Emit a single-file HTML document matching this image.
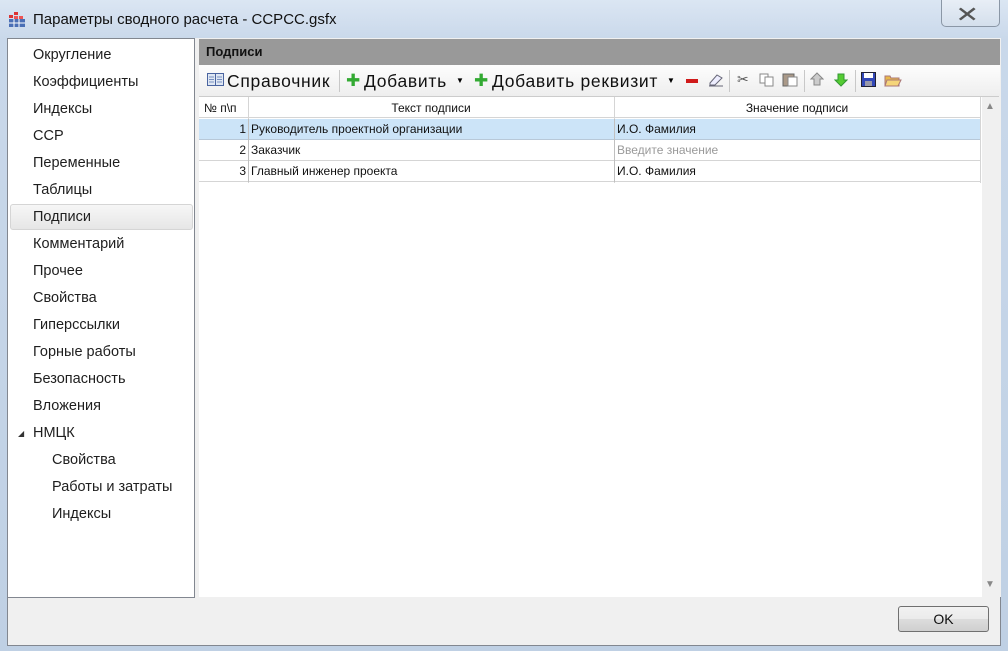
<!DOCTYPE html>
<html><head><meta charset="utf-8"><style>
*{margin:0;padding:0;box-sizing:border-box}
body{width:1008px;height:651px;overflow:hidden;font-family:"Liberation Sans","DejaVu Sans",sans-serif;background:linear-gradient(180deg,#dbe6f3 0,#c9d8ea 40px,#bfd0e4 100%);position:relative}
.a{position:absolute}
.side{left:7px;top:38px;width:188px;height:560px;background:#fff;border:1px solid #828790}
.side div{position:absolute;font-size:14.5px;color:#1e1e1e;white-space:nowrap}
.client{left:195px;top:38px;width:806px;height:608px;background:#f0f0f0}
.bottom{left:7px;top:597px;width:994px;height:49px;background:#f0f0f0;border:1px solid #828790;border-top:none}
.tb{font-size:17.5px;color:#111;white-space:nowrap;letter-spacing:0.7px}
.grid{left:199px;top:96px;width:800px;height:501px;background:#fff;border-top:1px solid #ccc}
.cell{position:absolute;font-size:12px;color:#111;white-space:nowrap;line-height:20px}
.sep{position:absolute;width:1px;height:22px;top:70px;background:#c8c8c8}
</style></head><body>
<svg class="a" style="left:8px;top:12px" width="18" height="16"><rect x="1" y="3" width="4" height="3" fill="#d33"/><rect x="6" y="0" width="4" height="3" fill="#d33"/><rect x="1" y="7" width="16" height="8" fill="#4a6fb5"/><rect x="6" y="4" width="4" height="3" fill="#e55"/><rect x="11" y="4" width="4" height="3" fill="#e55"/><line x1="1" y1="11" x2="17" y2="11" stroke="#fff"/><line x1="6" y1="7" x2="6" y2="15" stroke="#fff"/><line x1="11" y1="7" x2="11" y2="15" stroke="#fff"/></svg>
<div class="a" style="left:33px;top:11px;font-size:15px;color:#111">Параметры сводного расчета - CCPCC.gsfx</div>
<div class="a" style="left:941px;top:0;width:59px;height:27px;border:1px solid #8b97a6;border-top:none;border-radius:0 0 5px 5px;background:linear-gradient(#e8eef6,#d4dfec)"></div>
<div class="a" style="left:958px;top:2px;font-size:22px;color:#555;font-weight:bold;transform:scaleX(1.3)">✕</div>

<div class="a client"></div>
<div class="a bottom"></div>
<div class="a side">
<div style="left:25px;top:8px">Округление</div>
<div style="left:25px;top:35px">Коэффициенты</div>
<div style="left:25px;top:62px">Индексы</div>
<div style="left:25px;top:89px">ССР</div>
<div style="left:25px;top:116px">Переменные</div>
<div style="left:25px;top:143px">Таблицы</div>
<div style="left:2px;top:165px;width:183px;height:26px;border:1px solid #d5d5d5;border-radius:3px;background:linear-gradient(#f6f6f6,#e6e6e6)"></div>
<div style="left:25px;top:170px">Подписи</div>
<div style="left:25px;top:197px">Комментарий</div>
<div style="left:25px;top:224px">Прочее</div>
<div style="left:25px;top:251px">Свойства</div>
<div style="left:25px;top:278px">Гиперссылки</div>
<div style="left:25px;top:305px">Горные работы</div>
<div style="left:25px;top:332px">Безопасность</div>
<div style="left:25px;top:359px">Вложения</div>
<div style="left:10px;top:390px;font-size:8px;color:#333">◢</div>
<div style="left:25px;top:386px">НМЦК</div>
<div style="left:44px;top:413px">Свойства</div>
<div style="left:44px;top:440px">Работы и затраты</div>
<div style="left:44px;top:467px">Индексы</div>
</div>

<div class="a" style="left:199px;top:39px;width:801px;height:26px;background:#999"></div>
<div class="a" style="left:206px;top:44px;font-size:13px;font-weight:bold;color:#111">Подписи</div>
<div class="a" style="left:199px;top:65px;width:801px;height:31px;background:linear-gradient(#fdfdfd,#eeeeee)"></div>

<svg class="a" style="left:207px;top:73px" width="17" height="14"><rect x="0.5" y="0.5" width="16" height="12" fill="#dfe7f3" stroke="#4a64a0"/><line x1="8.5" y1="1" x2="8.5" y2="13" stroke="#4a64a0"/><path d="M2 4h5M2 6.5h5M2 9h5M10 4h5M10 6.5h5M10 9h5" stroke="#7890c0"/></svg>
<div class="a tb" style="left:227px;top:71px">Справочник</div>
<div class="sep" style="left:339px"></div>
<div class="a" style="left:346px;top:71px;font-size:17px;color:#3a3;font-weight:bold">✚</div>
<div class="a tb" style="left:364px;top:71px">Добавить</div>
<div class="a" style="left:456px;top:76px;font-size:8px">▼</div>
<div class="a" style="left:474px;top:71px;font-size:17px;color:#3a3;font-weight:bold">✚</div>
<div class="a tb" style="left:492px;top:71px">Добавить реквизит</div>
<div class="a" style="left:667px;top:76px;font-size:8px">▼</div>
<div class="a" style="left:686px;top:79px;width:12px;height:4px;background:#d01a1a"></div>
<svg class="a" style="left:707px;top:73px" width="17" height="14"><path d="M3 10L10 2l5 3-7 7H3z" fill="#eef" stroke="#667"/><line x1="2" y1="13" x2="16" y2="13" stroke="#667"/></svg>
<div class="sep" style="left:729px"></div>
<div class="a" style="left:737px;top:71px;font-size:14px;color:#555">✂</div>
<svg class="a" style="left:759px;top:73px" width="16" height="14"><rect x="1" y="1" width="8" height="9" fill="#fff" stroke="#888"/><rect x="6" y="4" width="8" height="9" fill="#fff" stroke="#888"/></svg>
<svg class="a" style="left:782px;top:72px" width="17" height="15"><rect x="1" y="2" width="11" height="12" fill="#a98" stroke="#666"/><rect x="6" y="5" width="9" height="9" fill="#fff" stroke="#888"/></svg>
<div class="sep" style="left:804px"></div>
<svg class="a" style="left:810px;top:72px" width="14" height="15"><path d="M7 1L1 7h3v6h6V7h3z" fill="#ccc" stroke="#888"/></svg>
<svg class="a" style="left:834px;top:72px" width="14" height="15"><path d="M7 14L1 8h3V2h6v6h3z" fill="#5c3" stroke="#393"/></svg>
<div class="sep" style="left:855px"></div>
<svg class="a" style="left:861px;top:72px" width="15" height="15"><rect x="0.5" y="0.5" width="14" height="14" fill="#3348b8" stroke="#223"/><rect x="3" y="1" width="9" height="5" fill="#fff"/><rect x="4" y="9" width="7" height="5" fill="#99a"/></svg>
<svg class="a" style="left:884px;top:72px" width="18" height="15"><path d="M1 4h5l1 2h8v8H1z" fill="#e8b84a" stroke="#a77"/><path d="M3 8h14l-3 6H1z" fill="#f5d57a" stroke="#a77"/></svg>

<div class="a grid"></div>
<div class="a" style="left:199px;top:97px;width:782px;height:21px;background:#fff;border-bottom:1px solid #d5d5d5"></div>
<div class="a" style="left:248px;top:97px;width:1px;height:86px;background:#d5d5d5"></div>
<div class="a" style="left:614px;top:97px;width:1px;height:86px;background:#d5d5d5"></div>
<div class="a" style="left:980px;top:97px;width:1px;height:86px;background:#d5d5d5"></div>
<div class="cell" style="left:204px;top:98px">№ п\п</div>
<div class="cell" style="left:248px;top:98px;width:366px;text-align:center">Текст подписи</div>
<div class="cell" style="left:614px;top:98px;width:366px;text-align:center">Значение подписи</div>
<div class="a" style="left:199px;top:119px;width:781px;height:21px;background:#cce4f8;border-bottom:1px solid #b8c8d8"></div>
<div class="a" style="left:199px;top:140px;width:781px;height:21px;border-bottom:1px solid #d5d5d5"></div>
<div class="a" style="left:199px;top:161px;width:781px;height:21px;border-bottom:1px solid #d5d5d5"></div>
<div class="a" style="left:248px;top:119px;width:1px;height:63px;background:#c0c0c0"></div>
<div class="a" style="left:614px;top:119px;width:1px;height:63px;background:#c0c0c0"></div>
<div class="cell" style="left:199px;top:119px;width:47px;text-align:right">1</div>
<div class="cell" style="left:251px;top:119px">Руководитель проектной организации</div>
<div class="cell" style="left:617px;top:119px">И.О. Фамилия</div>
<div class="cell" style="left:199px;top:140px;width:47px;text-align:right">2</div>
<div class="cell" style="left:251px;top:140px">Заказчик</div>
<div class="cell" style="left:617px;top:140px;color:#999">Введите значение</div>
<div class="cell" style="left:199px;top:161px;width:47px;text-align:right">3</div>
<div class="cell" style="left:251px;top:161px">Главный инженер проекта</div>
<div class="cell" style="left:617px;top:161px">И.О. Фамилия</div>
<div class="a" style="left:982px;top:97px;width:17px;height:500px;background:#f0f0f0"></div>
<div class="a" style="left:985px;top:101px;font-size:10px;color:#888">▲</div>
<div class="a" style="left:985px;top:579px;font-size:10px;color:#888">▼</div>

<div class="a" style="left:898px;top:606px;width:91px;height:26px;border:1px solid #707070;border-radius:3px;background:linear-gradient(#f2f2f2 0,#ebebeb 50%,#dddddd 50%,#cfcfcf 100%)"></div>
<div class="a" style="left:898px;top:611px;width:91px;text-align:center;font-size:14px;color:#111">OK</div>
</body></html>
